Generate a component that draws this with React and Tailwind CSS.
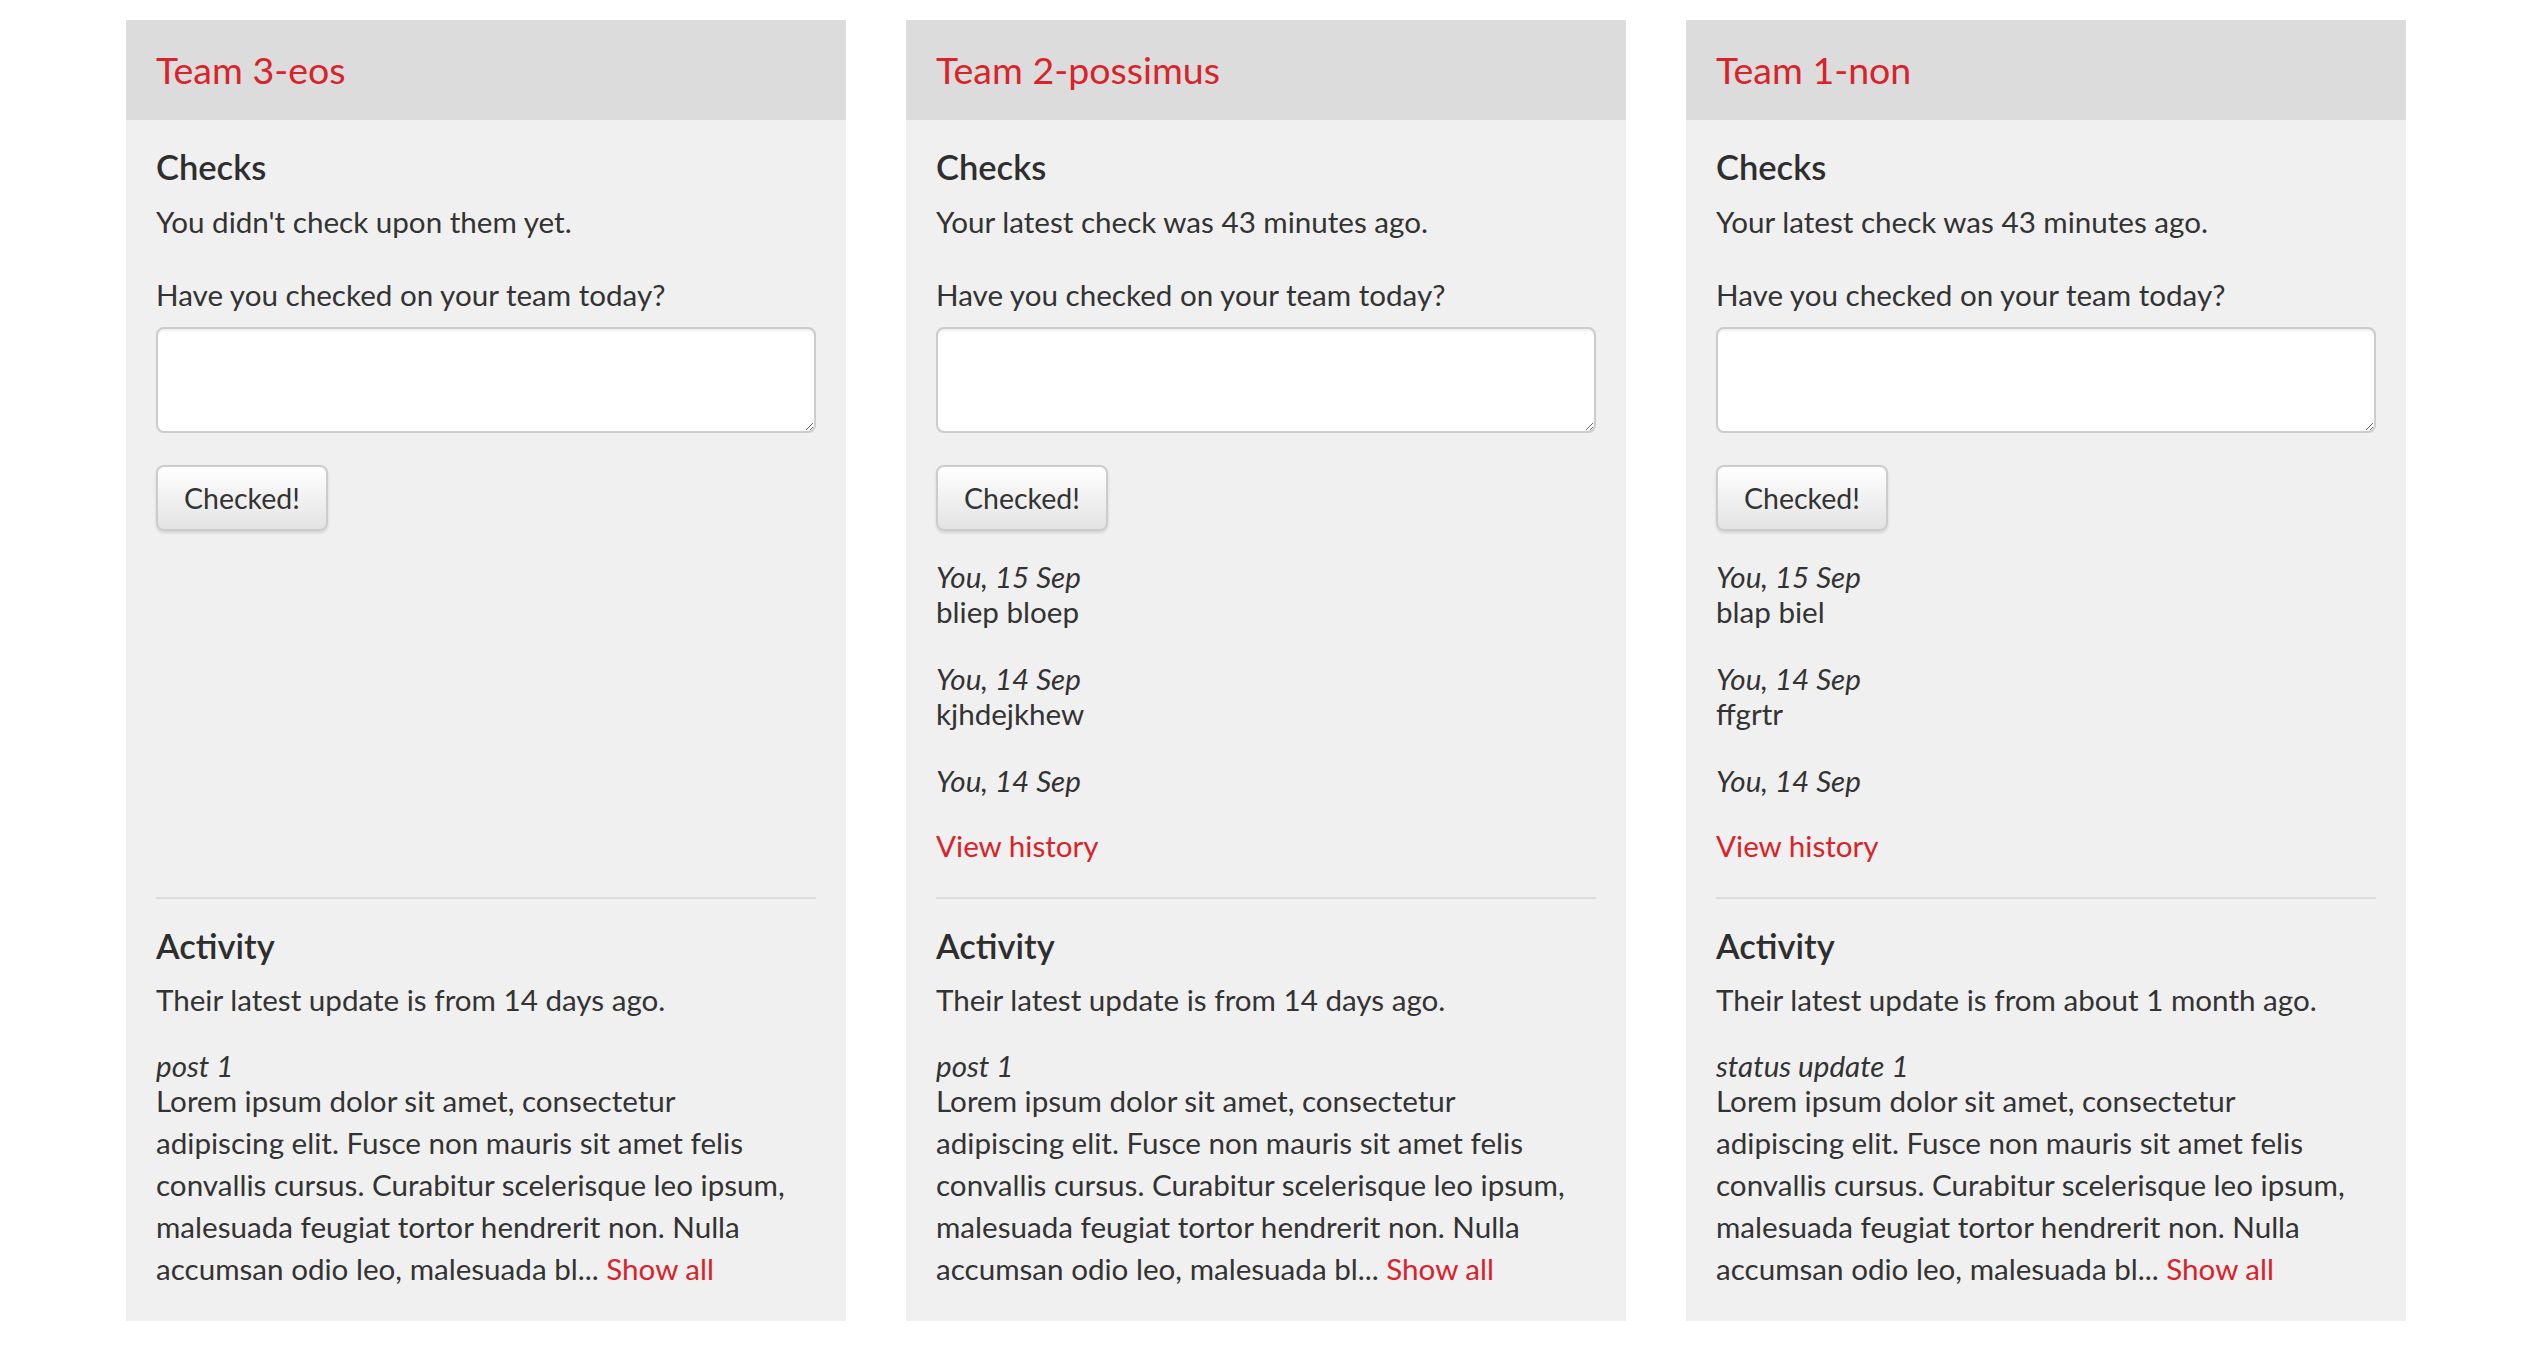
import React from "react";

const lorem =
  "Lorem ipsum dolor sit amet, consectetur adipiscing elit. Fusce non mauris sit amet felis convallis cursus. Curabitur scelerisque leo ipsum, malesuada feugiat tortor hendrerit non. Nulla accumsan odio leo, malesuada bl... ";

const teams = [
  {
    name: "Team 3-eos",
    latest: "You didn't check upon them yet.",
    checks: [],
    activity: "Their latest update is from 14 days ago.",
    post: "post 1",
  },
  {
    name: "Team 2-possimus",
    latest: "Your latest check was 43 minutes ago.",
    checks: [
      { who: "You, 15 Sep", msg: "bliep bloep" },
      { who: "You, 14 Sep", msg: "kjhdejkhew" },
      { who: "You, 14 Sep", msg: "" },
    ],
    activity: "Their latest update is from 14 days ago.",
    post: "post 1",
  },
  {
    name: "Team 1-non",
    latest: "Your latest check was 43 minutes ago.",
    checks: [
      { who: "You, 15 Sep", msg: "blap biel" },
      { who: "You, 14 Sep", msg: "ffgrtr" },
      { who: "You, 14 Sep", msg: "" },
    ],
    activity: "Their latest update is from about 1 month ago.",
    post: "status update 1",
  },
];

const TeamCard = ({ team }) => {
  return (
    <div className="w-[720px] bg-[#f0f0f0]">
      {/* Header */}
      <div className="h-[100px] bg-[#dcdcdc] px-[30px] flex items-center">
        <h2 className="text-[37.5px] leading-[40px] text-[#d8232a]">{team.name}</h2>
      </div>

      <div className="px-[30px] pt-[27px] pb-[31px]">
        {/* Checks */}
        <div className="min-h-[750px]">
          <h3 className="text-[34.5px] leading-[40px] font-semibold text-[#2e2e2e] mb-[14px]">Checks</h3>
          <p className="leading-[42px]">{team.latest}</p>
          <p className="leading-[42px] mt-[31px]">Have you checked on your team today?</p>
          <textarea className="block w-full h-[106px] mt-[11px] bg-white border-2 border-[#cccccc] rounded-[8px] shadow-[inset_0_2px_2px_rgba(0,0,0,0.06)] outline-none" />
          <button className="mt-[32px] h-[66px] px-[26px] text-[28.5px] text-[#333333] border-2 border-[#cccccc] rounded-[8px] bg-gradient-to-b from-white to-[#e3e3e3] shadow-[0_2px_3px_rgba(0,0,0,0.12)]">
            Checked!
          </button>
          {team.checks.length > 0 && (
            <div className="mt-[32px]">
              {team.checks.map((c, i) => (
                <div className="mb-[32px]" key={i}>
                  <div className="italic leading-[28px]">{c.who}</div>
                  {c.msg && <div className="leading-[42px]">{c.msg}</div>}
                </div>
              ))}
              <a href="#" className="block leading-[42px] text-[#d8232a] -mt-[2px]">
                View history
              </a>
            </div>
          )}
        </div>

        <hr className="border-0 h-[2px] bg-[#dcdcdc]" />

        {/* Activity */}
        <h3 className="text-[34.5px] leading-[40px] font-semibold text-[#2e2e2e] mt-[27px] mb-[13px]">Activity</h3>
        <p className="leading-[42px]">{team.activity}</p>
        <div className="mt-[31px]">
          <div className="italic leading-[28px]">{team.post}</div>
          <p className="leading-[42px] pr-[12px]">
            {lorem}
            <a href="#" className="text-[#d8232a]">Show all</a>
          </p>
        </div>
      </div>
    </div>
  );
};

export default function App() {
  return (
    <div
      className="min-h-screen bg-white text-[#333333] text-[29.6px]"
      style={{ fontFamily: "Lato, 'Open Sans', sans-serif" }}
    >
      <div className="flex items-start gap-[60px] pl-[126px] pt-[20px]">
        {teams.map((t) => (
          <TeamCard team={t} key={t.name} />
        ))}
      </div>
    </div>
  );
}
